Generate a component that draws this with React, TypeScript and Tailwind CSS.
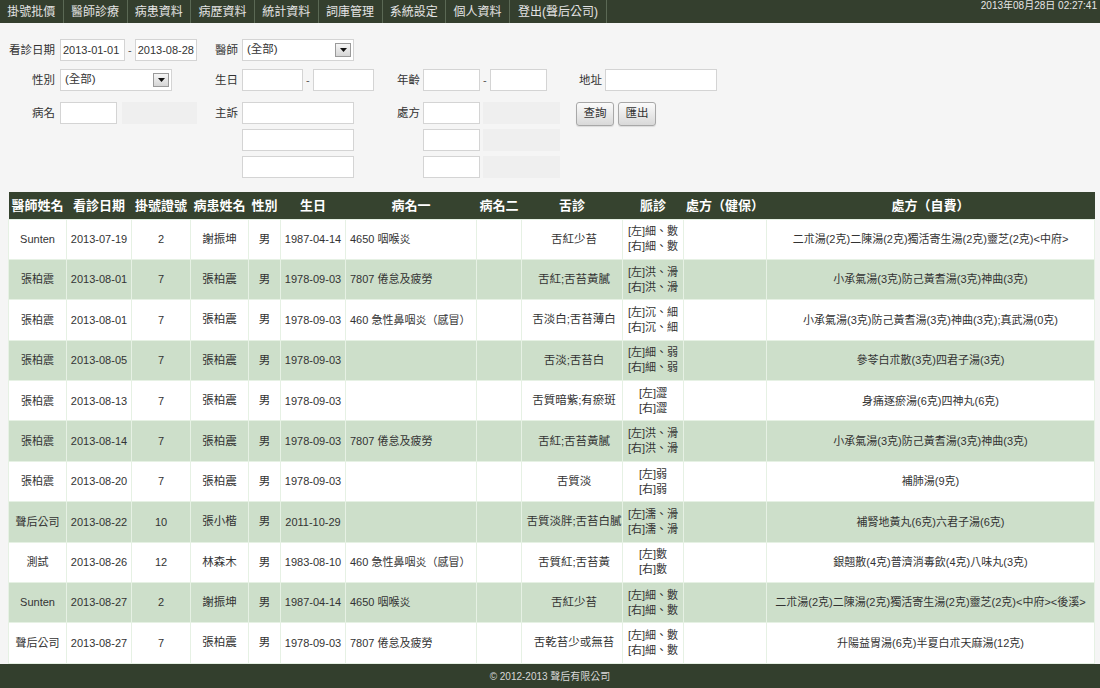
import React from "react"

const font = "font-['Liberation_Sans','Noto_Sans_CJK_TC',sans-serif]"

const navItems = ["掛號批價", "醫師診療", "病患資料", "病歷資料", "統計資料", "詞庫管理", "系統設定", "個人資料"]

type Row = {
  doctor: string
  date: string
  no: string
  patient: string
  sex: string
  birth: string
  dx1: string
  dx2: string
  tongue: string
  pulse: [string, string]
  rxIns: string
  rxSelf: string
}

const rows: Row[] = [
  { doctor: "Sunten", date: "2013-07-19", no: "2", patient: "謝振坤", sex: "男", birth: "1987-04-14", dx1: "4650 咽喉炎", dx2: "", tongue: "舌紅少苔", pulse: ["[左]細、數", "[右]細、數"], rxIns: "", rxSelf: "二朮湯(2克)二陳湯(2克)獨活寄生湯(2克)靈芝(2克)<中府>" },
  { doctor: "張柏震", date: "2013-08-01", no: "7", patient: "張柏震", sex: "男", birth: "1978-09-03", dx1: "7807 倦怠及疲勞", dx2: "", tongue: "舌紅;舌苔黃膩", pulse: ["[左]洪、滑", "[右]洪、滑"], rxIns: "", rxSelf: "小承氣湯(3克)防己黃耆湯(3克)神曲(3克)" },
  { doctor: "張柏震", date: "2013-08-01", no: "7", patient: "張柏震", sex: "男", birth: "1978-09-03", dx1: "460 急性鼻咽炎（感冒）", dx2: "", tongue: "舌淡白;舌苔薄白", pulse: ["[左]沉、細", "[右]沉、細"], rxIns: "", rxSelf: "小承氣湯(3克)防己黃耆湯(3克)神曲(3克);真武湯(0克)" },
  { doctor: "張柏震", date: "2013-08-05", no: "7", patient: "張柏震", sex: "男", birth: "1978-09-03", dx1: "", dx2: "", tongue: "舌淡;舌苔白", pulse: ["[左]細、弱", "[右]細、弱"], rxIns: "", rxSelf: "參苓白朮散(3克)四君子湯(3克)" },
  { doctor: "張柏震", date: "2013-08-13", no: "7", patient: "張柏震", sex: "男", birth: "1978-09-03", dx1: "", dx2: "", tongue: "舌質暗紫;有瘀斑", pulse: ["[左]澀", "[右]澀"], rxIns: "", rxSelf: "身痛逐瘀湯(6克)四神丸(6克)" },
  { doctor: "張柏震", date: "2013-08-14", no: "7", patient: "張柏震", sex: "男", birth: "1978-09-03", dx1: "7807 倦怠及疲勞", dx2: "", tongue: "舌紅;舌苔黃膩", pulse: ["[左]洪、滑", "[右]洪、滑"], rxIns: "", rxSelf: "小承氣湯(3克)防己黃耆湯(3克)神曲(3克)" },
  { doctor: "張柏震", date: "2013-08-20", no: "7", patient: "張柏震", sex: "男", birth: "1978-09-03", dx1: "", dx2: "", tongue: "舌質淡", pulse: ["[左]弱", "[右]弱"], rxIns: "", rxSelf: "補肺湯(9克)" },
  { doctor: "聲后公司", date: "2013-08-22", no: "10", patient: "張小楷", sex: "男", birth: "2011-10-29", dx1: "", dx2: "", tongue: "舌質淡胖;舌苔白膩", pulse: ["[左]濡、滑", "[右]濡、滑"], rxIns: "", rxSelf: "補腎地黃丸(6克)六君子湯(6克)" },
  { doctor: "測試", date: "2013-08-26", no: "12", patient: "林森木", sex: "男", birth: "1983-08-10", dx1: "460 急性鼻咽炎（感冒）", dx2: "", tongue: "舌質紅;舌苔黃", pulse: ["[左]數", "[右]數"], rxIns: "", rxSelf: "銀翹散(4克)普濟消毒飲(4克)八味丸(3克)" },
  { doctor: "Sunten", date: "2013-08-27", no: "2", patient: "謝振坤", sex: "男", birth: "1987-04-14", dx1: "4650 咽喉炎", dx2: "", tongue: "舌紅少苔", pulse: ["[左]細、數", "[右]細、數"], rxIns: "", rxSelf: "二朮湯(2克)二陳湯(2克)獨活寄生湯(2克)靈芝(2克)<中府><後溪>" },
  { doctor: "聲后公司", date: "2013-08-27", no: "7", patient: "張柏震", sex: "男", birth: "1978-09-03", dx1: "7807 倦怠及疲勞", dx2: "", tongue: "舌乾苔少或無苔", pulse: ["[左]細、數", "[右]細、數"], rxIns: "", rxSelf: "升陽益胃湯(6克)半夏白朮天麻湯(12克)" },
]

const headers = ["醫師姓名", "看診日期", "掛號證號", "病患姓名", "性別", "生日", "病名一", "病名二", "舌診", "脈診", "處方（健保）", "處方（自費）"]
const colWidths = [58, 65, 59, 58, 32, 65, 131, 45, 101, 61, 83, 328]

function Field({ className, value }: { className: string; value?: string }) {
  return (
    <div className={`h-[22px] overflow-hidden whitespace-nowrap border border-[#d4d4d4] bg-white px-[2px] leading-[20px] text-[11px] text-[#333] ${className}`}>
      {value}
    </div>
  )
}

function Select({ className, value }: { className: string; value: string }) {
  return (
    <div className={`flex h-[22px] items-center justify-between border border-[#d4d4d4] bg-white pl-[4px] pr-[2px] text-[11.5px] text-[#333] ${className}`}>
      <span>{value}</span>
      <span className="flex h-[14px] w-[16px] items-center justify-center border border-[#9a9a9a] bg-linear-to-b from-[#f6f6f6] to-[#d6d6d6]">
        <svg width="7" height="4" viewBox="0 0 7 4">
          <path d="M0 0h7L3.5 4z" fill="#111" />
        </svg>
      </span>
    </div>
  )
}

function Label({ className, text }: { className: string; text: string }) {
  return <div className={`h-[22px] shrink-0 whitespace-nowrap text-right leading-[22px] text-[11.5px] text-[#333] ${className}`}>{text}</div>
}

function Dash() {
  return <div className="mx-[3px] leading-[22px] text-[11px] text-[#555]">-</div>
}

function Faint({ className }: { className: string }) {
  return <div className={`h-[22px] bg-[#efefef] ${className}`} />
}

function Btn({ text }: { text: string }) {
  return (
    <div className="flex h-[24px] w-[38px] items-center justify-center rounded-[3px] border border-[#a8a8a8] bg-linear-to-b from-[#fbfbfb] to-[#d9d9d9] text-[11.5px] text-[#333] shadow-[0_1px_1px_rgba(0,0,0,0.1)]">
      {text}
    </div>
  )
}

export default function App() {
  return (
    <div className={`flex h-[688px] w-[1100px] flex-col overflow-hidden bg-[#f5f5f5] ${font}`}>
      {/* Top nav */}
      <div className="flex h-[23px] shrink-0 items-stretch justify-between bg-[#343f2e]">
        <div className="flex">
          {navItems.map((n) => (
            <div key={n} className="flex w-[63.75px] items-center justify-center border-r border-[#5b6955] text-[12px] text-[#e4e4e4]">
              {n}
            </div>
          ))}
          <div className="flex items-center border-r border-[#5b6955] px-[8px] text-[12px] text-[#e4e4e4]">登出(聲后公司)</div>
        </div>
        <div className="pr-[3px] text-[10px] leading-[12px] text-[#e6e6e6]">2013年08月28日 02:27:41</div>
      </div>

      {/* Filters */}
      <div className="shrink-0 pt-[16px]">
        <div className="flex">
          <div className="flex w-[205px]">
            <Label className="w-[55px]" text="看診日期" />
            <Field className="ml-[5px] w-[65px]" value="2013-01-01" />
            <Dash />
            <Field className="w-[62px]" value="2013-08-28" />
          </div>
          <div className="flex w-[183px]">
            <Label className="w-[33px]" text="醫師" />
            <Select className="ml-[4px] w-[112px]" value="(全部)" />
          </div>
        </div>

        <div className="mt-[8px] flex">
          <div className="flex w-[205px]">
            <Label className="w-[55px]" text="性別" />
            <Select className="ml-[5px] w-[112px]" value="(全部)" />
          </div>
          <div className="flex w-[183px]">
            <Label className="w-[33px]" text="生日" />
            <Field className="ml-[4px] w-[61px]" />
            <Dash />
            <Field className="w-[61px]" />
          </div>
          <div className="flex w-[182px]">
            <Label className="w-[32px]" text="年齡" />
            <Field className="ml-[3px] w-[57px]" />
            <Dash />
            <Field className="w-[57px]" />
          </div>
          <div className="flex">
            <Label className="w-[32px]" text="地址" />
            <Field className="ml-[3px] w-[112px]" />
          </div>
        </div>

        <div className="mt-[11px] flex items-start">
          <div className="flex w-[205px]">
            <Label className="w-[55px]" text="病名" />
            <Field className="ml-[5px] w-[57px]" />
            <Faint className="ml-[5px] w-[75px]" />
          </div>
          <div className="flex w-[183px]">
            <Label className="w-[33px]" text="主訴" />
            <div className="ml-[4px] flex flex-col gap-[5px]">
              <Field className="w-[112px]" />
              <Field className="w-[112px]" />
              <Field className="w-[112px]" />
            </div>
          </div>
          <div className="flex w-[190px]">
            <Label className="w-[32px]" text="處方" />
            <div className="ml-[3px] flex flex-col gap-[5px]">
              {[0, 1, 2].map((i) => (
                <div key={i} className="flex">
                  <Field className="w-[57px]" />
                  <Faint className="ml-[3px] w-[77px]" />
                </div>
              ))}
            </div>
          </div>
          <div className="ml-[-2px] flex gap-[4px]">
            <Btn text="查詢" />
            <Btn text="匯出" />
          </div>
        </div>
      </div>

      {/* Table */}
      <div className="mt-[14px] min-h-0 flex-1 pl-[8px]">
        <table className="w-[1086px] table-fixed border-collapse">
          <colgroup>
            {colWidths.map((w, i) => (
              <col key={i} style={{ width: w }} />
            ))}
          </colgroup>
          <thead>
            <tr className="h-[27px] bg-[#36432f]">
              {headers.map((h) => (
                <th key={h} className="whitespace-nowrap p-0 text-center text-[13px] font-bold text-white">
                  {h}
                </th>
              ))}
            </tr>
          </thead>
          <tbody className="text-[11px] text-[#333]">
            {rows.map((r, i) => (
              <tr key={i} className={`h-[40.4px] ${i % 2 === 1 ? "bg-[#cddfca]" : "bg-white"}`}>
                <td className="border border-[#e6f1e4] text-center">{r.doctor}</td>
                <td className="border border-[#e6f1e4] text-center">{r.date}</td>
                <td className="border border-[#e6f1e4] text-center">{r.no}</td>
                <td className="border border-[#e6f1e4] text-center text-[11.5px]">{r.patient}</td>
                <td className="border border-[#e6f1e4] text-center text-[11.5px]">{r.sex}</td>
                <td className="border border-[#e6f1e4] text-center">{r.birth}</td>
                <td className="whitespace-nowrap border border-[#e6f1e4] pl-[4px] text-left">{r.dx1}</td>
                <td className="border border-[#e6f1e4] text-center">{r.dx2}</td>
                <td className="whitespace-nowrap border border-[#e6f1e4] pl-[4px] text-center text-[11.5px]">{r.tongue}</td>
                <td className="whitespace-nowrap border border-[#e6f1e4] text-center leading-[15px]">
                  {r.pulse[0]}
                  <br />
                  {r.pulse[1]}
                </td>
                <td className="border border-[#e6f1e4] text-center">{r.rxIns}</td>
                <td className="whitespace-nowrap border border-[#e6f1e4] text-center">{r.rxSelf}</td>
              </tr>
            ))}
          </tbody>
        </table>
      </div>

      {/* Footer */}
      <div className="flex h-[24px] shrink-0 items-center justify-center bg-[#333f2d] text-[10px] text-[#d8d8d8]">
        © 2012-2013 聲后有限公司
      </div>
    </div>
  )
}
